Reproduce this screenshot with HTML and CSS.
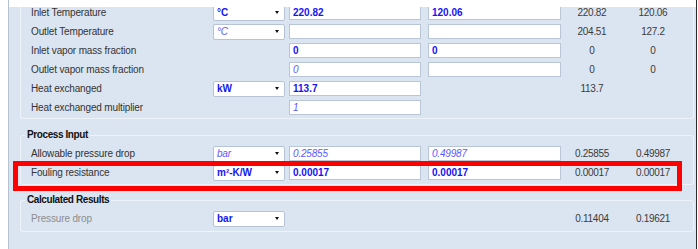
FILE: index.html
```html
<!DOCTYPE html>
<html lang="en">
<head>
  <meta charset="UTF-8" />
  <title>Exchanger Specs</title>
  <link rel="stylesheet" href="styles.css">
</head>
<body>
  <div class="panel">
    <div class="topbar"></div>
    <div class="scroll">
      <fieldset class="group group-first">
        <div class="row">
          <span class="label">Inlet Temperature</span>
          <div class="select bold"><span>°C</span><i class="arrow"></i></div>
          <div class="input bold">220.82</div>
          <div class="input input-wide bold">120.06</div>
          <span class="val">220.82</span>
          <span class="val">120.06</span>
        </div>
        <div class="row">
          <span class="label">Outlet Temperature</span>
          <div class="select soft"><span>°C</span><i class="arrow"></i></div>
          <div class="input"></div>
          <div class="input input-wide"></div>
          <span class="val">204.51</span>
          <span class="val">127.2</span>
        </div>
        <div class="row">
          <span class="label">Inlet vapor mass fraction</span>
          <span></span>
          <div class="input bold">0</div>
          <div class="input input-wide bold">0</div>
          <span class="val">0</span>
          <span class="val">0</span>
        </div>
        <div class="row">
          <span class="label">Outlet vapor mass fraction</span>
          <span></span>
          <div class="input soft">0</div>
          <div class="input input-wide"></div>
          <span class="val">0</span>
          <span class="val">0</span>
        </div>
        <div class="row">
          <span class="label">Heat exchanged</span>
          <div class="select bold"><span>kW</span><i class="arrow"></i></div>
          <div class="input bold">113.7</div>
          <span></span>
          <span class="val">113.7</span>
          <span class="val"></span>
        </div>
        <div class="row">
          <span class="label">Heat exchanged multiplier</span>
          <span></span>
          <div class="input soft">1</div>
          <span></span>
          <span class="val"></span>
          <span class="val"></span>
        </div>
      </fieldset>

      <fieldset class="group group-process">
        <legend>Process Input</legend>
        <div class="row">
          <span class="label">Allowable pressure drop</span>
          <div class="select soft"><span>bar</span><i class="arrow"></i></div>
          <div class="input soft">0.25855</div>
          <div class="input input-wide soft">0.49987</div>
          <span class="val">0.25855</span>
          <span class="val">0.49987</span>
        </div>
        <div class="row">
          <span class="label">Fouling resistance</span>
          <div class="select bold"><span>m²-K/W</span><i class="arrow"></i></div>
          <div class="input bold">0.00017</div>
          <div class="input input-wide bold">0.00017</div>
          <span class="val">0.00017</span>
          <span class="val">0.00017</span>
        </div>
      </fieldset>

      <fieldset class="group group-results">
        <legend>Calculated Results</legend>
        <div class="row">
          <span class="label label-muted">Pressure drop</span>
          <div class="select bold"><span>bar</span><i class="arrow"></i></div>
          <span></span>
          <span></span>
          <span class="val">0.11404</span>
          <span class="val">0.19621</span>
        </div>
      </fieldset>
    </div>

    <!-- red marker drawn over the fouling row -->
    <div class="highlight"></div>
  </div>
</body>
</html>
```

FILE: styles.css
```css
* { box-sizing: border-box; }
body {
  margin: 0;
  background: #fff;
  font-family: "Liberation Sans", Arial, sans-serif;
  font-size: 10px;
  color: #333;
}

.panel {
  position: relative;
  margin-left: 8px;
  width: 689px;
  height: 249px;
  border-left: 1px solid #b7c2d0;
  border-right: 1px solid #2a2a2a;
  background: #dbe5f1;
  overflow: hidden;
}
.topbar {
  height: 7px;
  background: #fff;
  position: relative;
  z-index: 2;
}
.scroll {
  padding: 0 2px 0 11px;
}

.group {
  margin: 0;
  padding: 0 0 0 10px;
  border: 1px solid #eef3f9;
  border-radius: 3px;
  min-width: 0;
}
.group legend {
  margin-left: -6px;
  padding: 0 2px;
  font-weight: 700;
  font-size: 10px;
  line-height: 14px;
  letter-spacing: -0.4px;
  color: #111;
}
.group-first {
  margin-top: -4px;
  border-top: none;
  border-radius: 0 0 3px 3px;
  padding-bottom: 1px;
}
.group-process {
  margin-top: 9px;
  padding-top: 2px;
  padding-bottom: 2px;
}
.group-results {
  margin-top: 8px;
  padding-top: 2px;
  padding-bottom: 3px;
}

.row {
  display: grid;
  grid-template-columns: 182px 76px 139px 133px 62px 60px;
  align-items: center;
  height: 19px;
}
.label {
  letter-spacing: -0.15px;
  color: #333;
}
.label-muted { color: #8c8c8c; }

.select {
  width: 72px;
  height: 16px;
  display: flex;
  align-items: center;
  padding: 0 5px 0 3px;
  background: #fff;
  border: 1px solid #b5c3d5;
  border-radius: 2px;
}
.arrow {
  margin-left: auto;
  width: 0;
  height: 0;
  border-left: 2.5px solid transparent;
  border-right: 2.5px solid transparent;
  border-top: 3px solid #111;
}

.input {
  width: 132px;
  height: 15px;
  line-height: 13px;
  padding: 0 3px;
  background: #fff;
  border: 1px solid #b9c6d6;
}
.input-wide { width: 133px; }

.bold {
  font-weight: 700;
  color: #1414f5;
}
.soft {
  font-style: italic;
  color: #5a5aff;
  letter-spacing: -0.2px;
}

.val {
  text-align: center;
  color: #3a3a3a;
  letter-spacing: -0.3px;
}

.highlight {
  position: absolute;
  left: 4px;
  top: 161px;
  width: 669px;
  height: 30px;
  border: 5px solid #ff0000;
}
```
